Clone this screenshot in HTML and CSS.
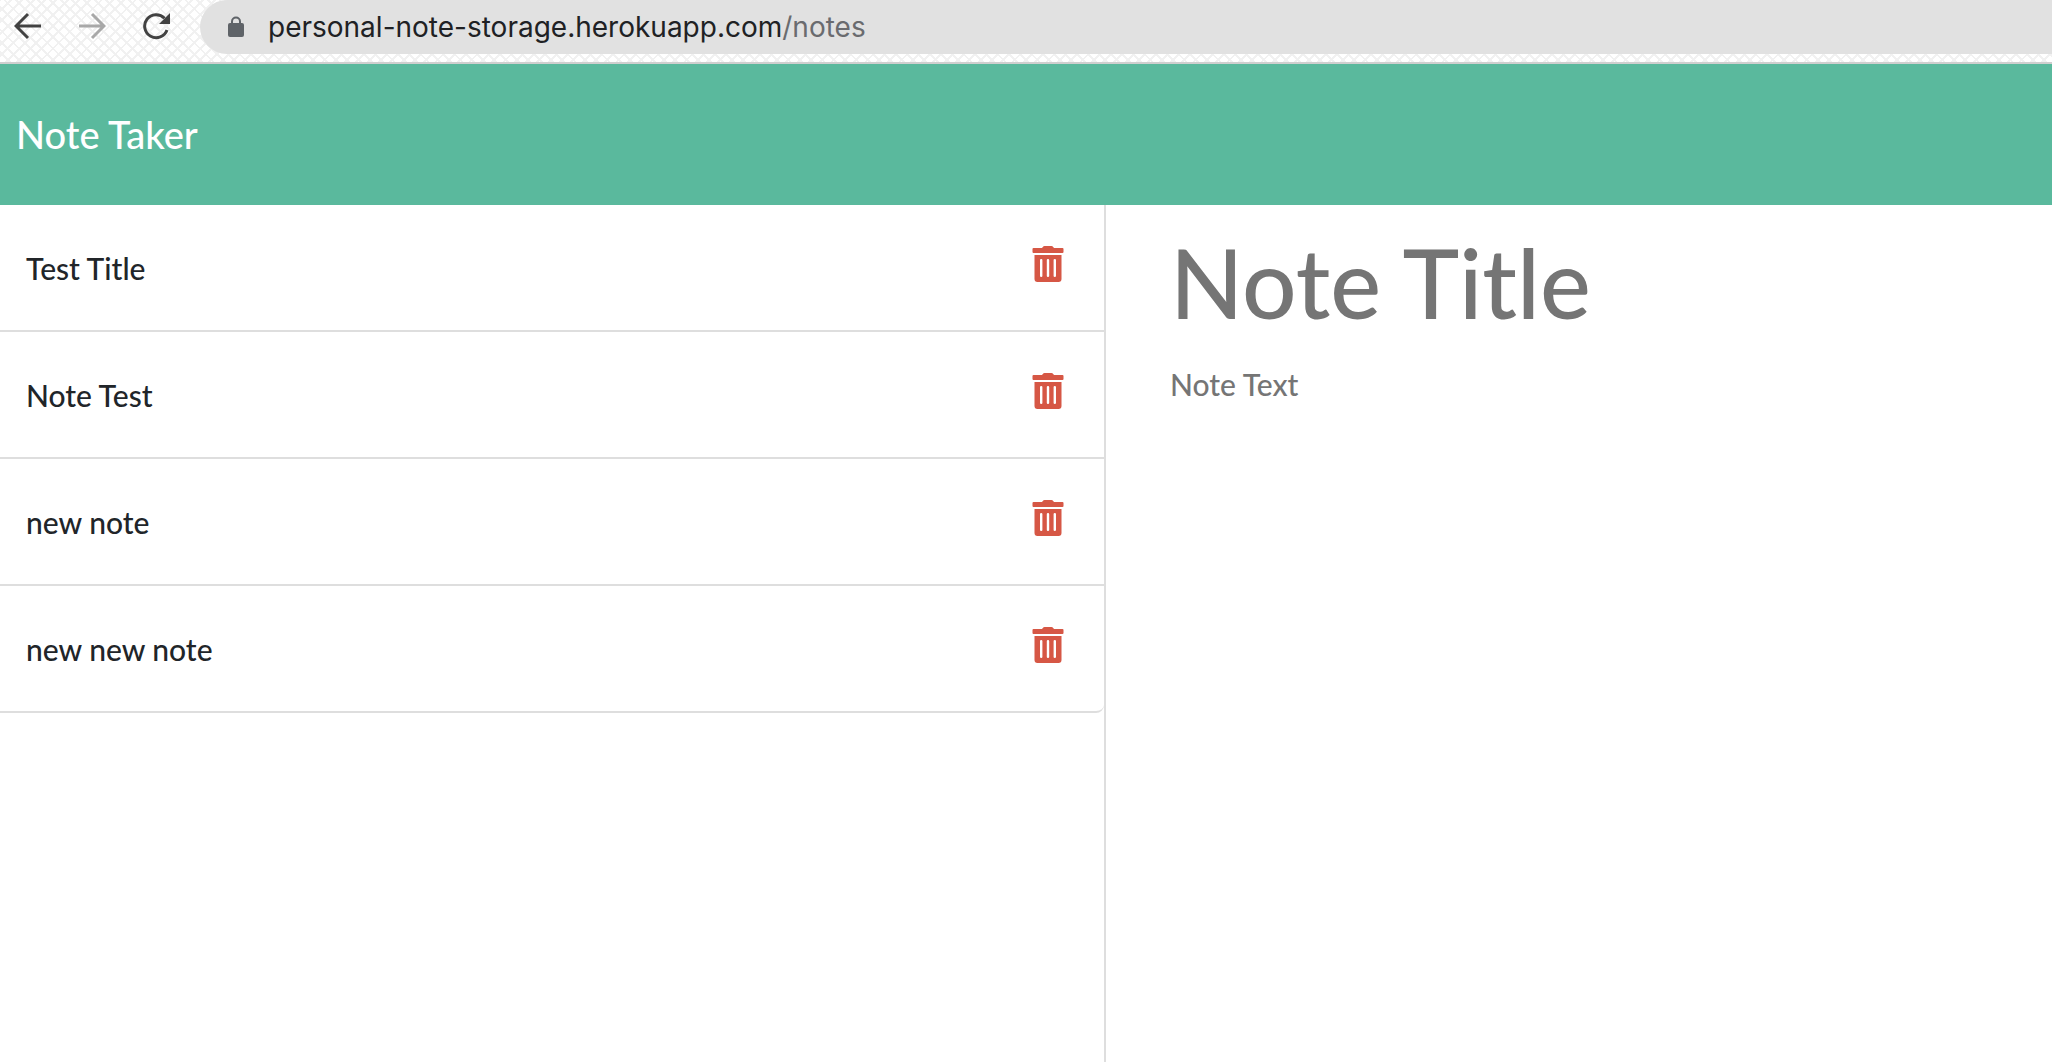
FILE: index.html
```html
<!DOCTYPE html>
<html lang="en">
<head>
<meta charset="utf-8">
<title>Note Taker</title>
<link rel="stylesheet" href="styles.css">
</head>
<body>
<svg class="sprite" aria-hidden="true">
  <symbol id="trash" viewBox="0 0 32 36">
    <path fill-rule="evenodd" d="M1.500 2H10l1-1.300Q11.500 0 12.500 0h7q1 0 1.500.7L22 2h8.500Q31.500 2 31.500 3v3q0 1-1 1H1.500q-1 0-1-1V3q0-1 1-1ZM2.500 9h27v24q0 3-3 3h-21q-3 0-3-3ZM8 14v16q0 1 1.200 1t1.200-1V14q0-1-1.200-1T8 14Zm6.800 0v16q0 1 1.200 1t1.200-1V14q0-1-1.200-1t-1.200 1Zm6.800 0v16q0 1 1.200 1t1.200-1V14q0-1-1.200-1t-1.200 1Z"/>
  </symbol>
</svg>
<div class="toolbar">
  <button class="tool" type="button" aria-label="Back">
    <svg width="28" height="28" viewBox="0 0 28 28"><path d="M27 14H3M14 2L2 14l12 12"/></svg>
  </button>
  <button class="tool tool-off" type="button" aria-label="Forward">
    <svg width="28" height="28" viewBox="0 0 28 28"><path d="M1 14h24M14 2l12 12-12 12"/></svg>
  </button>
  <button class="tool" type="button" aria-label="Reload">
    <svg width="28" height="28" viewBox="0 0 28 28"><path d="M25 18A11.500 11.500 0 1 1 22.500 6.200"/><path class="solid" d="M28 1v11H17Z"/></svg>
  </button>
  <div class="address">
    <svg class="lock" width="16" height="22" viewBox="0 0 16 22"><path d="M4 8V5.500a4 4 0 0 1 8 0V8" fill="none" stroke="currentColor" stroke-width="2"/><rect y="7" width="16" height="14" rx="2" fill="currentColor"/></svg>
    <span class="url">personal-note-storage.herokuapp.com<span class="path">/notes</span></span>
  </div>
</div>
<header class="navbar"><a class="brand" href="#">Note Taker</a></header>
<main class="notes">
  <aside class="sidebar">
    <ul class="list">
      <li class="item"><span>Test Title</span><button class="delete" type="button" aria-label="Delete Test Title"><svg width="32" height="36"><use href="#trash"/></svg></button></li>
      <li class="item"><span>Note Test</span><button class="delete" type="button" aria-label="Delete Note Test"><svg width="32" height="36"><use href="#trash"/></svg></button></li>
      <li class="item"><span>new note</span><button class="delete" type="button" aria-label="Delete new note"><svg width="32" height="36"><use href="#trash"/></svg></button></li>
      <li class="item"><span>new new note</span><button class="delete" type="button" aria-label="Delete new new note"><svg width="32" height="36"><use href="#trash"/></svg></button></li>
    </ul>
  </aside>
  <form class="editor">
    <input class="note-title" type="text" placeholder="Note Title" aria-label="Note Title">
    <textarea class="note-text" placeholder="Note Text" aria-label="Note Text"></textarea>
  </form>
</main>
</body>
</html>
```
FILE: styles.css
```css
* { box-sizing: border-box; }
body {
  margin: 0;
  min-height: 100vh;
  display: flex;
  flex-direction: column;
  font-family: Lato, sans-serif;
  font-size: 30px;
  font-weight: 500;
  line-height: 48px;
  color: #212529;
  background: #fff;
}
button, input, textarea { font: inherit; border: 0; padding: 0; background: none; }
.sprite { display: none; }

.toolbar {
  display: flex;
  height: 64px;
  padding-left: 14px;
  border-bottom: 2px solid #cfcfcf;
  background-color: #fff;
  background-image:
    repeating-linear-gradient(45deg, transparent 0 6px, #f1f1f1 6px 8px),
    repeating-linear-gradient(-45deg, transparent 0 6px, #f1f1f1 6px 8px);
}
.tool {
  width: 28px;
  height: 52px;
  margin-right: 36px;
  display: flex;
  align-items: center;
  color: #424242;
}
.tool-off { color: #a8a8a8; }
.tool path { fill: none; stroke: currentColor; stroke-width: 3; }
.tool .solid { fill: currentColor; stroke: none; }
.address {
  flex: 1;
  height: 54px;
  margin-left: -6px;
  padding: 0 28px;
  display: flex;
  align-items: center;
  gap: 24px;
  border-radius: 27px 0 0 27px;
  background: #e1e1e1;
}
.lock { color: #5f6368; }
.url { font: 28px/52px Inter, sans-serif; color: #202124; }
.path { color: #6a6b6f; }

.navbar { padding: 46px 16px 47px; background: #5ab99d; }
.brand { display: block; font-size: 38px; color: #fff; text-decoration: none; }

.notes { flex: 1; display: grid; grid-template-columns: 539fr 461fr; }
.sidebar { border-right: 2px solid #dedede; }
.list {
  margin: 0;
  padding: 0;
  list-style: none;
  border-bottom: 2px solid #dedede;
  border-radius: 0 0 8px 0;
}
.item {
  display: flex;
  justify-content: space-between;
  padding: 39px 40px 38px 26px;
}
.item + .item { border-top: 2px solid #dedede; }
.delete { height: 38px; padding-top: 2px; color: #d65745; }
.delete svg { display: block; fill: currentColor; }
.editor { display: flex; flex-direction: column; padding: 19px 64px; }
.note-title { width: 100%; font-size: 96px; line-height: 116px; height: 116px; }
.note-text { flex: 1; margin-top: 20px; resize: none; }
::placeholder { color: #757575; opacity: 1; }
```
